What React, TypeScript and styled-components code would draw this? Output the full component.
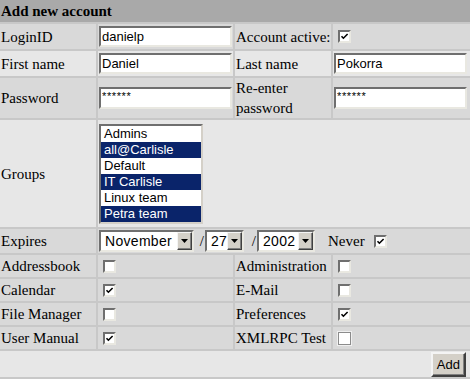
import styled, { createGlobalStyle } from "styled-components";

const GlobalStyle = createGlobalStyle`
  html, body {
    margin: 0;
    padding: 0;
    background: #c8c8c8;
  }
`;

const groups = [
  { name: "Admins", selected: false },
  { name: "all@Carlisle", selected: true },
  { name: "Default", selected: false },
  { name: "IT Carlisle", selected: true },
  { name: "Linux team", selected: false },
  { name: "Petra team", selected: true },
];

interface APP {
  label: string;
  checked: boolean;
  flat?: boolean;
}

const apps: [APP, APP][] = [
  [
    { label: "Addressbook", checked: false },
    { label: "Administration", checked: false },
  ],
  [
    { label: "Calendar", checked: true },
    { label: "E-Mail", checked: false },
  ],
  [
    { label: "File Manager", checked: false },
    { label: "Preferences", checked: true },
  ],
  [
    { label: "User Manual", checked: true },
    { label: "XMLRPC Test", checked: false, flat: true },
  ],
];

const CheckBox = ({ checked, flat, gap }: { checked?: boolean; flat?: boolean; gap?: number }) => (
  <Check $flat={flat} $gap={gap}>
    {checked && (
      <svg width="9" height="9" viewBox="0 0 9 9">
        <path d="M1.5 4.2 L3.4 6.2 L7.6 2" fill="none" stroke="#000" strokeWidth="1.6" />
      </svg>
    )}
  </Check>
);

const Dropdown = ({ value, width }: { value: string; width: number }) => (
  <Select $w={width}>
    <SelectText>{value}</SelectText>
    <Arrow>
      <svg width="7" height="4" viewBox="0 0 7 4">
        <polygon points="0,0 7,0 3.5,4" fill="#000" />
      </svg>
    </Arrow>
  </Select>
);

const App = () => {
  return (
    <>
      <GlobalStyle />
      <Form>
        <Title $span={4}>Add new account</Title>

        <Cell>LoginID</Cell>
        <Cell>
          <TextBox defaultValue="danielp" />
        </Cell>
        <Cell>Account active:</Cell>
        <Cell>
          <CheckBox checked />
        </Cell>

        <Cell $light>First name</Cell>
        <Cell $light>
          <TextBox defaultValue="Daniel" />
        </Cell>
        <Cell $light>Last name</Cell>
        <Cell $light>
          <TextBox defaultValue="Pokorra" />
        </Cell>

        <Cell>Password</Cell>
        <Cell>
          <TextBox $secret defaultValue="******" />
        </Cell>
        <Cell $wrap>Re-enter password</Cell>
        <Cell>
          <TextBox $secret defaultValue="******" />
        </Cell>

        <Cell $light>Groups</Cell>
        <Cell $light $span={3}>
          <ListBox>
            {groups.map((g) => (
              <Option key={g.name} $sel={g.selected}>
                {g.name}
              </Option>
            ))}
          </ListBox>
        </Cell>

        <Cell>Expires</Cell>
        <Cell $span={3}>
          <Dropdown value="November" width={95} />
          <Slash $w={11}>/</Slash>
          <Dropdown value="27" width={39} />
          <Slash $w={13}>/</Slash>
          <Dropdown value="2002" width={58} />
          <Never>Never</Never>
          <CheckBox checked gap={9} />
        </Cell>

        {apps.map(([left, right]) => (
          <Row key={left.label}>
            <Cell>{left.label}</Cell>
            <Cell>
              <CheckBox checked={left.checked} />
            </Cell>
            <Cell>{right.label}</Cell>
            <Cell>
              <CheckBox checked={right.checked} flat={right.flat} />
            </Cell>
          </Row>
        ))}

        <Cell $light $span={4} $end>
          <Button>Add</Button>
        </Cell>
      </Form>
    </>
  );
};

const Form = styled.div`
  display: grid;
  grid-template-columns: 96px 135px 96px 137px;
  grid-template-rows: 22px 25px 25px 40px 107px 24px repeat(4, 22px) 26px;
  gap: 2px;
  width: 470px;
  background: #c8c8c8;
  font-family: "Liberation Serif", "Times New Roman", serif;
  font-size: 15px;
  color: #000;
`;

const Row = styled.div`
  display: contents;
`;

const Cell = styled.div<{ $light?: boolean; $span?: number; $end?: boolean; $wrap?: boolean }>`
  grid-column: span ${(p) => p.$span ?? 1};
  display: flex;
  align-items: center;
  justify-content: ${(p) => (p.$end ? "flex-end" : "flex-start")};
  padding: ${(p) => (p.$end ? "0 4px 0 1px" : "0 1px")};
  line-height: 20px;
  white-space: ${(p) => (p.$wrap ? "normal" : "nowrap")};
  background: ${(p) => (p.$light ? "#e7e7e7" : "#d9d9d9")};
`;

const Title = styled(Cell)`
  background: #a9a9a9;
  font-weight: bold;
`;

const TextBox = styled.input<{ $secret?: boolean }>`
  box-sizing: border-box;
  width: 133px;
  height: ${(p) => (p.$secret ? "22px" : "21px")};
  margin: 0;
  padding: ${(p) => (p.$secret ? "0 0 4px 1px" : "0 1px")};
  border: 2px solid;
  border-color: #6f6f6f #e9e8e1 #e9e8e1 #6f6f6f;
  background: #fff;
  font-family: "Liberation Sans", Arial, sans-serif;
  font-size: ${(p) => (p.$secret ? "11px" : "13px")};
  letter-spacing: ${(p) => (p.$secret ? "0.6px" : "0")};
  color: #000;
  outline: none;
`;

const ListBox = styled.div`
  box-sizing: border-box;
  width: 104px;
  height: 100px;
  border: 2px solid;
  border-color: #6f6f6f #d4d0c8 #d4d0c8 #6f6f6f;
  background: #fff;
  overflow: hidden;
`;

const Option = styled.div<{ $sel: boolean }>`
  height: 16px;
  line-height: 16px;
  padding-left: 3px;
  white-space: nowrap;
  font-family: "Liberation Sans", Arial, sans-serif;
  font-size: 13px;
  background: ${(p) => (p.$sel ? "#0a246a" : "#fff")};
  color: ${(p) => (p.$sel ? "#fff" : "#000")};
`;

const Select = styled.div<{ $w: number }>`
  box-sizing: border-box;
  display: flex;
  width: ${(p) => p.$w}px;
  height: 22px;
  border: 2px solid;
  border-color: #6f6f6f #e9e8e1 #e9e8e1 #6f6f6f;
  background: #fff;
`;

const SelectText = styled.span`
  flex: 1;
  padding-left: 4px;
  font-family: "Liberation Sans", Arial, sans-serif;
  font-size: 14px;
  line-height: 18px;
  letter-spacing: 0.3px;
  overflow: hidden;
`;

const Arrow = styled.span`
  box-sizing: border-box;
  display: flex;
  align-items: center;
  justify-content: center;
  width: 15px;
  height: 18px;
  background: #d4d0c8;
  border: 1px solid;
  border-color: #f4f4f4 #404040 #404040 #f4f4f4;
  box-shadow: inset -1px -1px #808080;
`;

const Slash = styled.span<{ $w: number }>`
  width: ${(p) => p.$w}px;
  padding-right: 1px;
  box-sizing: border-box;
  text-align: right;
`;

const Never = styled.span`
  margin-left: 13px;
`;

const Check = styled.span<{ $flat?: boolean; $gap?: number }>`
  box-sizing: border-box;
  display: inline-flex;
  align-items: center;
  justify-content: center;
  width: 13px;
  height: 13px;
  margin-left: ${(p) => p.$gap ?? 4}px;
  background: #fff;
  border: ${(p) => (p.$flat ? "1px" : "2px")} solid;
  border-color: ${(p) =>
    p.$flat ? "#8c8c8c" : "#6f6f6f #e9e8e1 #e9e8e1 #6f6f6f"};
  box-shadow: ${(p) => (p.$flat ? "0 0 0 1px #f0f0f0" : "none")};
`;

const Button = styled.button`
  box-sizing: border-box;
  height: 25px;
  margin: 0;
  padding: 0 4px;
  border: 2px solid;
  border-color: #f4f4f4 #404040 #404040 #f4f4f4;
  box-shadow: inset -1px -1px #808080;
  background: #d4d0c8;
  font-family: "Liberation Sans", Arial, sans-serif;
  font-size: 13px;
  color: #000;
`;

export default App;
